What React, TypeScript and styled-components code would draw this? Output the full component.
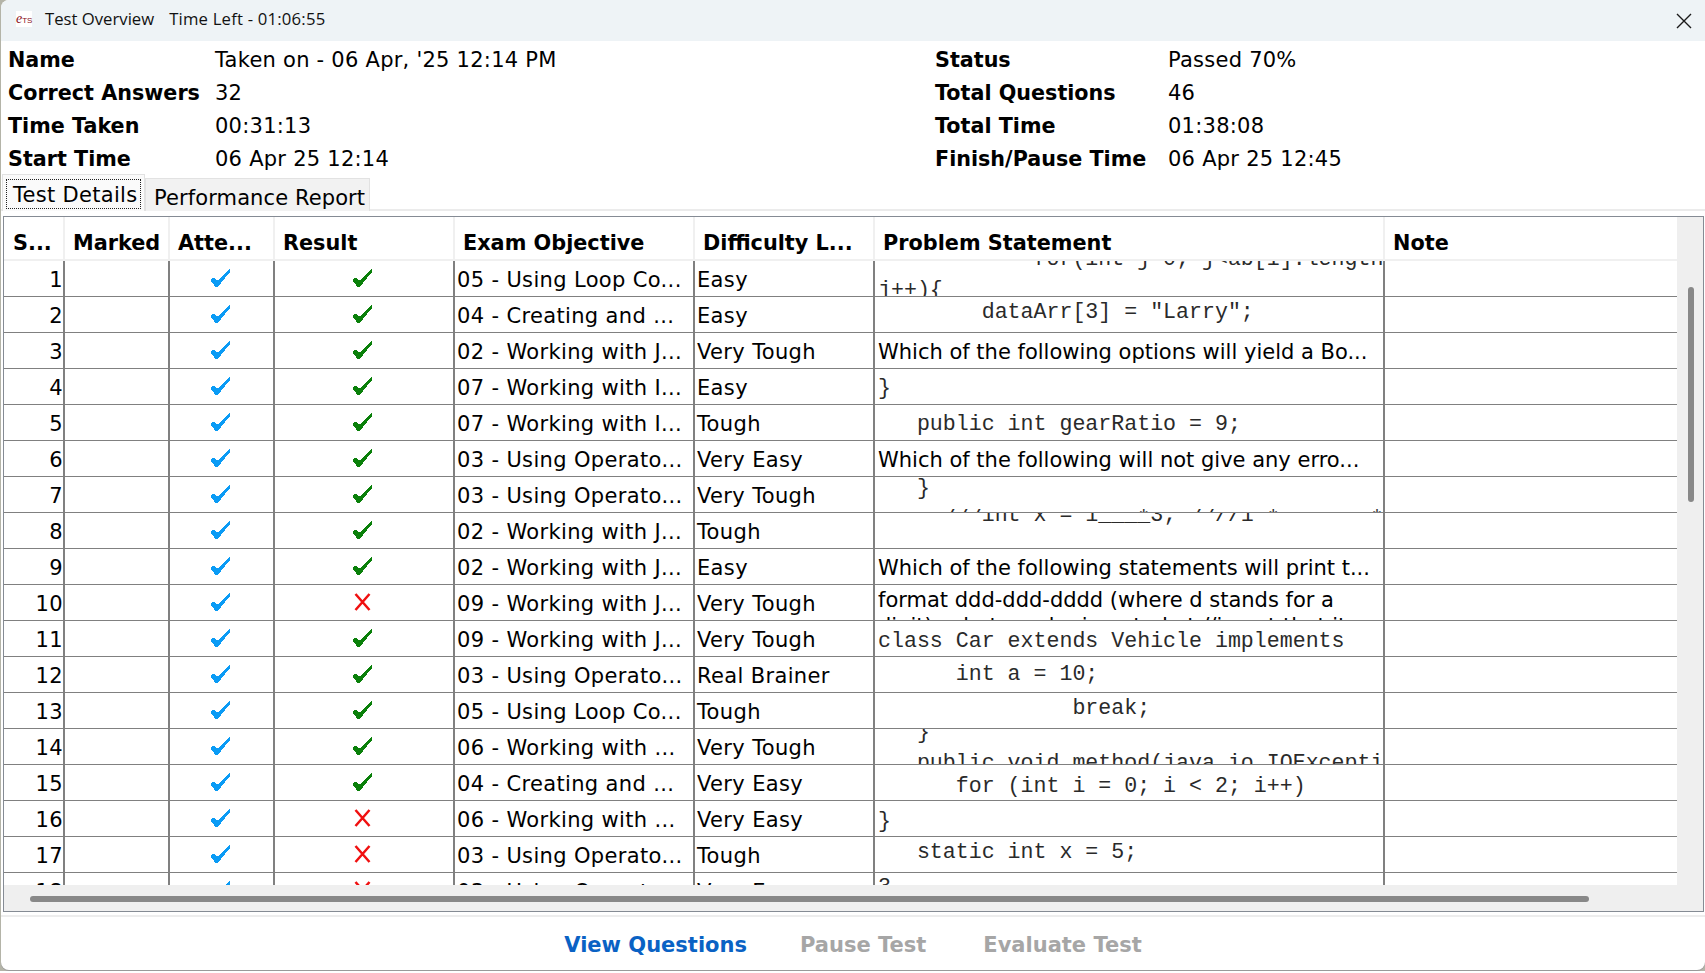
import React from "react";
import styled, { createGlobalStyle } from "styled-components";

const Global = createGlobalStyle`
  html, body { margin: 0; padding: 0; background: #b4b4a8; }
  body { font-family: "DejaVu Sans", sans-serif; color: #000; overflow: hidden; }
  * { box-sizing: border-box; }
`;

const Page = styled.div`
  width: 1705px;
  height: 973px;
  display: flex;
  flex-direction: column;
  overflow: hidden;
`;
const Window = styled.div`
  margin-left: 1px;
  height: 970px;
  flex: none;
  display: flex;
  flex-direction: column;
  background: #fff;
  border-radius: 8px 0 8px 8px;
  overflow: hidden;
  box-shadow: 0 1px 0 #9a9a9a;
`;
const Backdrop = styled.div`
  height: 3px;
  margin-top: 1px;
  padding-left: 27px;
  overflow: hidden;
  background: #fff;
  font-size: 20px;
  line-height: 20px;
`;
const TitleBar = styled.header`
  height: 41px;
  flex: none;
  display: flex;
  align-items: center;
  background: #eef3f6;
  padding: 0 0 4px 15px;
  font-family: "Open Sans", sans-serif;
  font-size: 16.7px;
  color: #111;
`;
const Logo = styled.span`
  width: 16px;
  height: 16px;
  background: #fff;
  color: #8a0f1c;
  font-size: 8px;
  line-height: 16px;
  white-space: nowrap;
  font-family: "Liberation Sans", sans-serif;
  margin-right: 13px;
  b { font-family: "Liberation Serif", serif; font-style: italic; font-weight: 400; font-size: 14px; }
`;
const TimeLeft = styled.span`
  margin-left: 15px;
  letter-spacing: 0.2px;
`;
const Close = styled.button`
  margin: 4px 13px 0 auto;
  width: 16px;
  height: 16px;
  padding: 0;
  border: 0;
  background: none;
  display: flex;
`;
const Info = styled.section`
  height: 133px;
  flex: none;
  padding: 2px 0 0 7px;
  display: grid;
  grid-template-columns: 207px 720px 233px 1fr;
  grid-auto-rows: 33px;
  align-items: center;
`;
const Label = styled.div`
  font-weight: 700;
  font-size: 20.7px;
  white-space: nowrap;
`;
const Value = styled.div`
  font-size: 21px;
  letter-spacing: 0.25px;
  white-space: nowrap;
`;
const Tabs = styled.nav`
  height: 37px;
  flex: none;
  display: flex;
  align-items: flex-end;
  padding-left: 1px;
  border-bottom: 2px solid #ebebeb;
`;
const Tab = styled.div<{ $active?: boolean }>`
  white-space: nowrap;
  font-size: 21px;
  letter-spacing: ${p => (p.$active ? "0.3px" : "0.1px")};
  display: flex;
  align-items: ${p => (p.$active ? "flex-start" : "center")};
  background: ${p => (p.$active ? "#fafafa" : "#f2f2f2")};
  border: 1px solid #e2e2e2;
  border-bottom: 0;
  height: ${p => (p.$active ? "37px" : "33px")};
  padding: ${p => (p.$active ? "4px 3px 0" : "5px 4px 0 8px")};
  margin-bottom: -2px;
`;
const Focus = styled.span`
  border: 1px dotted #222;
  width: 135px;
  height: 30px;
  display: flex;
  align-items: center;
  padding: 1px 0 0 6px;
`;
const Frame = styled.section`
  margin: 5px 1px 0 2px;
  height: 696px;
  flex: none;
  display: flex;
  flex-direction: column;
  border: 1px solid #858b94;
  background: #efefef;
`;
const FrameTop = styled.div`
  flex: 1;
  min-height: 0;
  display: flex;
`;
const Table = styled.div`
  width: 1673px;
  flex: none;
  background: #fff;
  overflow: hidden;
`;
const columns = "61px 105px 105px 180px 240px 180px 510px 292px";
const HeadRow = styled.div`
  display: grid;
  grid-template-columns: ${columns};
  height: 44px;
  border-bottom: 2px solid #f0f0f0;
`;
const HeadCell = styled.div`
  font-weight: 700;
  font-size: 20.8px;
  padding: 9px 0 0 8px;
  display: flex;
  align-items: center;
  white-space: nowrap;
  overflow: hidden;
  border-right: 2px solid #f0f0f0;
  &:first-child { padding-left: 9px; }
  &:last-child { border-right: 0; }
`;
const Row = styled.div`
  display: grid;
  grid-template-columns: ${columns};
  height: 36px;
  border-bottom: 1px solid #808080;
`;
const Cell = styled.div<{ $kind?: "num" | "icon" }>`
  font-size: 21px;
  letter-spacing: 0.35px;
  height: 36px;
  margin-bottom: -1px;
  border-right: 2px solid #808080;
  display: flex;
  align-items: center;
  justify-content: ${p => (p.$kind === "num" ? "flex-end" : p.$kind === "icon" ? "center" : "flex-start")};
  padding: ${p => (p.$kind === "icon" ? "0 3px 2px 0" : p.$kind === "num" ? "2px 0 0 0" : "2px 0 0 2px")};
  white-space: nowrap;
  overflow: hidden;
  &:last-child { border-right: 0; }
`;
const ProblemCell = styled.div`
  height: 35px;
  border-right: 2px solid #808080;
  padding-left: 3px;
  overflow: hidden;
  display: flow-root;
`;
const Lines = styled.div<{ $shift: number; $code: boolean }>`
  margin-top: ${p => p.$shift}px;
  white-space: pre;
  font-family: ${p => (p.$code ? '"Liberation Mono", monospace' : '"DejaVu Sans", sans-serif')};
  font-size: ${p => (p.$code ? "21.6px" : "21px")};
  line-height: ${p => (p.$code ? "31px" : "26px")};
  color: ${p => (p.$code ? "#2a2a2a" : "#000")};
`;
const VTrack = styled.div`
  flex: 1;
  padding: 70px 0 0 11px;
`;
const VThumb = styled.div`
  width: 6px;
  height: 215px;
  border-radius: 3px;
  background: #888;
`;
const HTrack = styled.div`
  height: 26px;
  flex: none;
  padding: 11px 0 0 26px;
`;
const HThumb = styled.div`
  width: 1559px;
  height: 6px;
  border-radius: 3px;
  background: #888;
`;
const Footer = styled.footer`
  margin-top: 3px;
  flex: 1;
  border-top: 2px solid #ededed;
  display: flex;
  align-items: center;
  justify-content: center;
  gap: 53px;
  font-size: 21px;
  font-weight: 700;
  padding-top: 2px;
`;
const Action = styled.div<{ $on?: boolean; $extra?: number }>`
  color: ${p => (p.$on ? "#0a62c4" : "#a6a6a6")};
  margin-left: ${p => p.$extra || 0}px;
  white-space: nowrap;
`;

const Check = ({ color }: { color: string }) => (
  <svg width="19" height="18" viewBox="0 0 19 18" shapeRendering="crispEdges">
    <polygon points="0,10 3,8.5 6.5,11.5 19,0 19,3 7.5,17 6,18 4.5,18 0,12" fill={color} />
  </svg>
);
const Cross = () => (
  <svg width="17" height="18" viewBox="0 0 17 18">
    <path d="M1.5 1 L15.5 17 M15.5 1 L1.5 17" stroke="#f01010" strokeWidth="2.5" fill="none" />
  </svg>
);
const CloseIcon = () => (
  <svg width="16" height="16" viewBox="0 0 16 16">
    <path d="M1 1 L15 15 M15 1 L1 15" stroke="#1a1a1a" strokeWidth="1.4" fill="none" />
  </svg>
);

type P = { lines: string[]; shift: number; code?: boolean };
type R = [string, string, P, boolean];

const rows: R[] = [
  ["05 - Using Loop Co...", "Easy", { code: true, shift: -17, lines: ["            for(int j=0; j<ab[i].length;", "j++){"] }, true],
  ["04 - Creating and ...", "Easy", { code: true, shift: 0, lines: ['        dataArr[3] = "Larry";'] }, true],
  ["02 - Working with J...", "Very Tough", { shift: 6, lines: ["Which of the following options will yield a Bo..."] }, true],
  ["07 - Working with I...", "Easy", { code: true, shift: 4, lines: ["}"] }, true],
  ["07 - Working with I...", "Tough", { code: true, shift: 4, lines: ["   public int gearRatio = 9;"] }, true],
  ["03 - Using Operato...", "Very Easy", { shift: 6, lines: ["Which of the following will not give any erro..."] }, true],
  ["03 - Using Operato...", "Very Tough", { code: true, shift: -4, lines: ["   }", "     ///            *   //    *       *"] }, true],
  ["02 - Working with J...", "Tough", { code: true, shift: -13, lines: ["        int x = 1____3;   //1"] }, true],
  ["02 - Working with J...", "Easy", { shift: 6, lines: ["Which of the following statements will print t..."] }, true],
  ["09 - Working with J...", "Very Tough", { shift: 2, lines: ["format ddd-ddd-dddd (where d stands for a", "digit), what can be inserted at //insert that it"] }, false],
  ["09 - Working with J...", "Very Tough", { code: true, shift: 5, lines: ["class Car extends Vehicle implements"] }, true],
  ["03 - Using Operato...", "Real Brainer", { code: true, shift: 2, lines: ["      int a = 10;"] }, true],
  ["05 - Using Loop Co...", "Tough", { code: true, shift: 0, lines: ["               break;"] }, true],
  ["06 - Working with ...", "Very Tough", { code: true, shift: -12, lines: ["   }", "   public void method(java.io.IOExcepti"] }, true],
  ["04 - Creating and ...", "Very Easy", { code: true, shift: 6, lines: ["      for (int i = 0; i < 2; i++)"] }, true],
  ["06 - Working with ...", "Very Easy", { code: true, shift: 5, lines: ["}"] }, false],
  ["03 - Using Operato...", "Tough", { code: true, shift: 0, lines: ["   static int x = 5;"] }, false],
  ["03 - Using Operato...", "Very Easy", { code: true, shift: -1, lines: ["3"] }, false],
];

const heads = ["S...", "Marked", "Atte...", "Result", "Exam Objective", "Difficulty L...", "Problem Statement", "Note"];

const info: [string, string, string, string][] = [
  ["Name", "Taken on - 06 Apr, '25 12:14 PM", "Status", "Passed 70%"],
  ["Correct Answers", "32", "Total Questions", "46"],
  ["Time Taken", "00:31:13", "Total Time", "01:38:08"],
  ["Start Time", "06 Apr 25 12:14", "Finish/Pause Time", "06 Apr 25 12:45"],
];

export default function App() {
  return (
    <Page>
      <Global />
      <Window>
        <TitleBar>
          <Logo>
            <b>e</b>TS
          </Logo>
          <span>Test Overview</span>
          <TimeLeft>Time Left - 01:06:55</TimeLeft>
          <Close aria-label="Close">
            <CloseIcon />
          </Close>
        </TitleBar>
        <Info>
          {info.map(r => (
            <React.Fragment key={r[0]}>
              <Label>{r[0]}</Label>
              <Value>{r[1]}</Value>
              <Label>{r[2]}</Label>
              <Value>{r[3]}</Value>
            </React.Fragment>
          ))}
        </Info>
        <Tabs>
          <Tab $active>
            <Focus>Test Details</Focus>
          </Tab>
          <Tab>Performance Report</Tab>
        </Tabs>
        <Frame>
          <FrameTop>
            <Table>
              <HeadRow>
                {heads.map(h => (
                  <HeadCell key={h}>{h}</HeadCell>
                ))}
              </HeadRow>
              {rows.map((r, i) => (
                <Row key={i}>
                  <Cell $kind="num">{i + 1}</Cell>
                  <Cell />
                  <Cell $kind="icon">
                    <Check color="#0a9bf5" />
                  </Cell>
                  <Cell $kind="icon">{r[3] ? <Check color="#0a800a" /> : <Cross />}</Cell>
                  <Cell>{r[0]}</Cell>
                  <Cell>{r[1]}</Cell>
                  <ProblemCell>
                    <Lines $shift={r[2].shift} $code={!!r[2].code}>
                      {r[2].lines.join("\n")}
                    </Lines>
                  </ProblemCell>
                  <Cell />
                </Row>
              ))}
            </Table>
            <VTrack>
              <VThumb />
            </VTrack>
          </FrameTop>
          <HTrack>
            <HThumb />
          </HTrack>
        </Frame>
        <Footer>
          <Action $on>View Questions</Action>
          <Action>Pause Test</Action>
          <Action $extra={4}>Evaluate Test</Action>
        </Footer>
      </Window>
      <Backdrop>Easy Lost</Backdrop>
    </Page>
  );
}
